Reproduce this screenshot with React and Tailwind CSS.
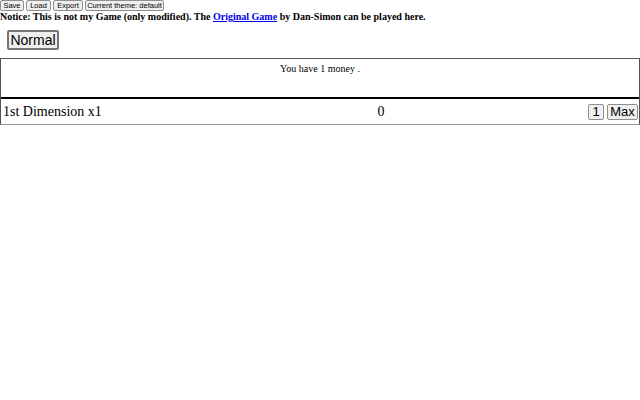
export default function App() {
  const smallBtn =
    "bg-[#efefef] border border-[#8f8f8f] rounded-[2px] px-0 h-[11px] leading-[9px] text-[7.5px] text-black whitespace-nowrap flex items-center justify-center";
  return (
    <div className="w-[640px] h-[400px] bg-white text-black" style={{ fontFamily: '"Liberation Serif", serif' }}>
      <div className="flex gap-[2px]" style={{ fontFamily: '"Liberation Sans", sans-serif' }}>
        <button className={smallBtn + " w-[24px]"}>Save</button>
        <button className={smallBtn + " w-[25px]"}>Load</button>
        <button className={smallBtn + " w-[30px]"}>Export</button>
        <button className={smallBtn + " w-[79px]"}>Current theme: default</button>
      </div>
      <div className="text-[10px] font-bold leading-[12px]">
        Notice: This is not my Game (only modified). The{" "}
        <a href="#" className="text-[#0000ee] underline">Original Game</a> by Dan-Simon can be played here.
      </div>
      <div className="pl-[7px] pt-[7px] pb-[8px] flex">
        <button
          className="bg-[#efefef] border-2 border-[#767676] rounded-[2px] w-[52px] h-[20px] text-[14px] leading-[14px]"
          style={{ fontFamily: '"Liberation Sans", sans-serif' }}
        >
          Normal
        </button>
      </div>
      <div className="border border-[#555] border-b-[#999]">
        <div className="h-[40px] border-b-2 border-black text-center text-[10px] leading-[12px] pt-[4px]">You have 1 money .</div>
        <div className="flex items-center h-[25px] text-[14px]">
          <div className="w-[373px] pl-[2px]">1st Dimension x1</div>
          <div className="w-[14px] text-center">0</div>
          <div className="flex-1 flex justify-end gap-[3px] pr-[1px]" style={{ fontFamily: '"Liberation Sans", sans-serif' }}>
            <button className="bg-[#efefef] border border-[#8f8f8f] rounded-[2px] w-[16px] h-[16px] leading-[14px] text-[13px]">1</button>
            <button className="bg-[#efefef] border border-[#8f8f8f] rounded-[2px] w-[31px] h-[16px] leading-[14px] text-[13px]">Max</button>
          </div>
        </div>
      </div>
    </div>
  );
}
